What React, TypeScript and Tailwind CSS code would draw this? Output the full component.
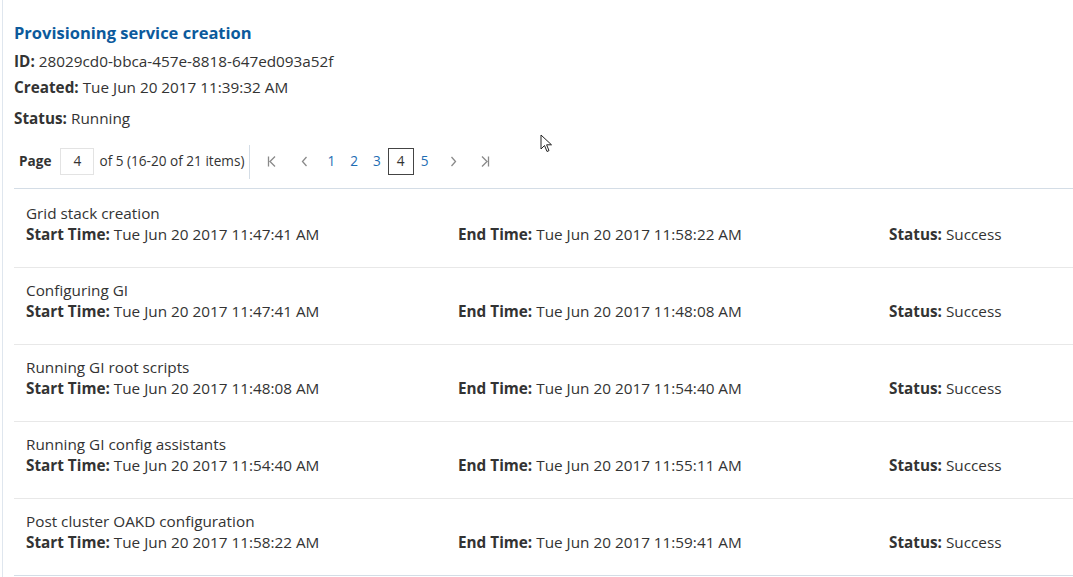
import React from "react";

const rows = [
  { name: "Grid stack creation", start: "Tue Jun 20 2017 11:47:41 AM", end: "Tue Jun 20 2017 11:58:22 AM" },
  { name: "Configuring GI", start: "Tue Jun 20 2017 11:47:41 AM", end: "Tue Jun 20 2017 11:48:08 AM" },
  { name: "Running GI root scripts", start: "Tue Jun 20 2017 11:48:08 AM", end: "Tue Jun 20 2017 11:54:40 AM" },
  { name: "Running GI config assistants", start: "Tue Jun 20 2017 11:54:40 AM", end: "Tue Jun 20 2017 11:55:11 AM" },
  { name: "Post cluster OAKD configuration", start: "Tue Jun 20 2017 11:58:22 AM", end: "Tue Jun 20 2017 11:59:41 AM" },
];

function Cursor() {
  return (
    <svg className="absolute left-[540px] top-[134px]" width="14" height="20" viewBox="0 0 14 20">
      <path d="M1 1 L1 15 L4.5 11.5 L7 17.5 L9 16.6 L6.6 10.8 L11.5 10.8 Z" fill="#fff" stroke="#222" strokeWidth="1" strokeLinejoin="round" />
    </svg>
  );
}

export default function App() {
  return (
    <div
      className="relative w-[1073px] h-[577px] bg-white text-[#333] overflow-hidden"
      style={{ fontFamily: '"Open Sans", "Noto Sans", sans-serif' }}
    >
      <div className="absolute left-[2px] top-0 bottom-0 w-px bg-[#dfe6ee]" />
      <Cursor />
      <div className="pl-[14px]">
        <h1 className="pt-[21px] text-[16.5px] font-bold text-[#0c5a9c] leading-[24px]">Provisioning service creation</h1>
        <div className="mt-[4px] text-[15.3px] leading-[24px]">
          <span className="font-bold">ID:</span> 28029cd0-bbca-457e-8818-647ed093a52f
        </div>
        <div className="mt-[2px] text-[15.3px] leading-[24px]">
          <span className="font-bold">Created:</span> Tue Jun 20 2017 11:39:32 AM
        </div>
        <div className="mt-[7px] text-[15.3px] leading-[24px]">
          <span className="font-bold">Status:</span> Running
        </div>
        <div className="mt-[14px] flex items-center h-[35px] text-[13.6px]">
          <span className="ml-[5px] font-bold">Page</span>
          <div className="ml-[9px] w-[34px] h-[27px] border border-[#e3e3e3] flex items-center justify-center text-[#333]">4</div>
          <span className="ml-[5px]">of 5 (16-20 of 21 items)</span>
          <div className="ml-[5px] w-px h-[34px] bg-[#d4dde6]" />
          <div className="flex items-center text-[#1e6db3]">
            <svg className="ml-[17px]" width="10" height="11" viewBox="0 0 10 11" fill="none" stroke="#8a8a8a" strokeWidth="1.3">
              <path d="M1.5 0.5 V10.5 M8 0.5 L3 5.5 L8 10.5" />
            </svg>
            <svg className="ml-[24px]" width="7" height="11" viewBox="0 0 7 11" fill="none" stroke="#8a8a8a" strokeWidth="1.3">
              <path d="M5.5 1 L1.5 5.5 L5.5 10" />
            </svg>
            <span className="ml-[19px]">1</span>
            <span className="ml-[15px]">2</span>
            <span className="ml-[15px]">3</span>
            <div className="ml-[7px] w-[26px] h-[27px] border border-[#444] flex items-center justify-center text-[#333]">4</div>
            <span className="ml-[7px]">5</span>
            <svg className="ml-[21px]" width="7" height="11" viewBox="0 0 7 11" fill="none" stroke="#8a8a8a" strokeWidth="1.3">
              <path d="M1.5 1 L5.5 5.5 L1.5 10" />
            </svg>
            <svg className="ml-[23px]" width="10" height="11" viewBox="0 0 10 11" fill="none" stroke="#8a8a8a" strokeWidth="1.3">
              <path d="M8.5 0.5 V10.5 M2 0.5 L7 5.5 L2 10.5" />
            </svg>
          </div>
        </div>
        <div className="mt-[9px] pt-[2px] border-t border-[#d4dde6]">
          {rows.map((r, i) => (
            <div
              key={i}
              className={`h-[77px] pl-[12px] pt-[12px] text-[15.3px] leading-[21px] ${i < rows.length - 1 ? "border-b border-[#e8e8e8]" : "border-b border-[#d4dde6]"}`}
            >
              <div>{r.name}</div>
              <div className="flex">
                <div className="w-[432px]">
                  <span className="font-bold">Start Time:</span> {r.start}
                </div>
                <div className="w-[431px]">
                  <span className="font-bold">End Time:</span> {r.end}
                </div>
                <div>
                  <span className="font-bold">Status:</span> Success
                </div>
              </div>
            </div>
          ))}
        </div>
      </div>
    </div>
  );
}
